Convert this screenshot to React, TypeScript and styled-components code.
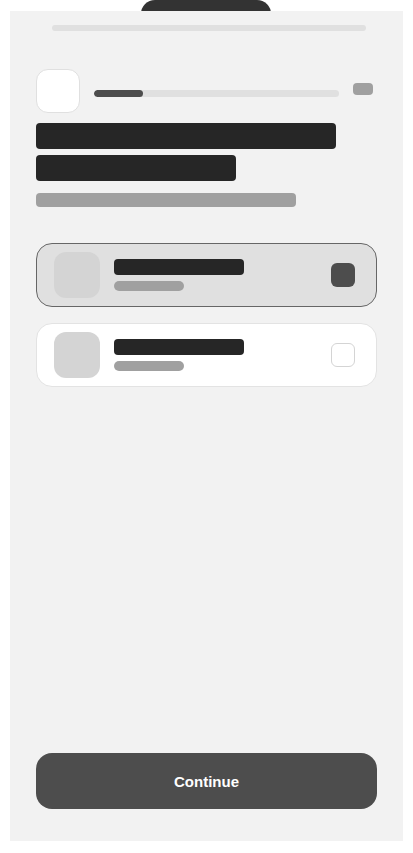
import styled, { createGlobalStyle } from 'styled-components'

const GlobalStyle = createGlobalStyle`
  * {
    box-sizing: border-box;
  }
  html, body {
    margin: 0;
    padding: 0;
    background: #ffffff;
    font-family: 'Liberation Sans', Arial, sans-serif;
  }
`

const options = [
  { id: 'a', selected: true },
  { id: 'b', selected: false },
]

function App() {
  return (
    <>
      <GlobalStyle />
      <Screen>
        <Notch />
        <Panel>
          <TopBar />
          <Header>
            <AvatarBox />
            <Track>
              <TrackFill style={{ width: '20%' }} />
            </Track>
            <Pill />
          </Header>
          <Title>
            <TitleLine width={300} />
            <TitleLine width={200} />
          </Title>
          <Subtitle />
          <OptionList>
            {options.map((opt) => (
              <OptionCard key={opt.id} selected={opt.selected}>
                <OptionIcon />
                <OptionText>
                  <OptionLabel />
                  <OptionHint />
                </OptionText>
                <Check selected={opt.selected} />
              </OptionCard>
            ))}
          </OptionList>
          <Spacer />
          <ContinueButton type="button">Continue</ContinueButton>
        </Panel>
      </Screen>
    </>
  )
}

const Screen = styled.div`
  position: relative;
  width: 413px;
  height: 853px;
  padding: 11px 10px 12px;
`

const Notch = styled.div`
  position: absolute;
  top: 0;
  left: 141px;
  width: 130px;
  height: 30px;
  border-radius: 14px;
  background: #333333;
`

const Panel = styled.main`
  position: relative;
  display: flex;
  flex-direction: column;
  height: 100%;
  padding: 14px 26px 32px;
  background: #f2f2f2;
`

const TopBar = styled.div`
  height: 6px;
  margin: 0 11px 0 16px;
  border-radius: 3px;
  background: #e0e0e0;
`

const Header = styled.div`
  display: flex;
  align-items: flex-start;
  gap: 14px;
  margin-top: 38px;
`

const AvatarBox = styled.div`
  flex: none;
  width: 44px;
  height: 44px;
  border-radius: 12px;
  border: 1px solid #e0e0e0;
  background: #ffffff;
`

const Track = styled.div`
  flex: 1;
  height: 7px;
  margin-top: 21px;
  border-radius: 4px;
  background: #e0e0e0;
  overflow: hidden;
`

const TrackFill = styled.div`
  height: 100%;
  border-radius: 4px;
  background: #4d4d4d;
`

const Pill = styled.div`
  flex: none;
  width: 20px;
  height: 12px;
  margin: 14px 4px 0 0;
  border-radius: 4px;
  background: #a0a0a0;
`

const Title = styled.div`
  display: flex;
  flex-direction: column;
  gap: 6px;
  margin-top: 10px;
`

const TitleLine = styled.div<{ width: number }>`
  width: ${(p) => p.width}px;
  height: 26px;
  border-radius: 4px;
  background: #262626;
`

const Subtitle = styled.div`
  width: 260px;
  height: 14px;
  margin-top: 12px;
  border-radius: 4px;
  background: #a0a0a0;
`

const OptionList = styled.div`
  display: flex;
  flex-direction: column;
  gap: 16px;
  margin-top: 36px;
`

const OptionCard = styled.div<{ selected: boolean }>`
  display: flex;
  align-items: center;
  height: 64px;
  padding: 0 21px 0 17px;
  border-radius: 16px;
  border: ${(p) => (p.selected ? '1.5px solid #666666' : '1.5px solid #e3e3e3')};
  background: ${(p) => (p.selected ? '#e0e0e0' : '#ffffff')};
`

const OptionIcon = styled.div`
  flex: none;
  width: 46px;
  height: 46px;
  border-radius: 12px;
  background: #d4d4d4;
`

const OptionText = styled.div`
  flex: 1;
  display: flex;
  flex-direction: column;
  gap: 6px;
  margin-left: 14px;
`

const OptionLabel = styled.div`
  width: 130px;
  height: 16px;
  border-radius: 4px;
  background: #262626;
`

const OptionHint = styled.div`
  width: 70px;
  height: 10px;
  border-radius: 5px;
  background: #a0a0a0;
`

const Check = styled.div<{ selected: boolean }>`
  flex: none;
  width: 24px;
  height: 24px;
  border-radius: 6px;
  border: ${(p) => (p.selected ? 'none' : '1.5px solid #d4d4d4')};
  background: ${(p) => (p.selected ? '#4d4d4d' : '#ffffff')};
`

const Spacer = styled.div`
  flex: 1;
`

const ContinueButton = styled.button`
  height: 56px;
  border: none;
  border-radius: 16px;
  background: #4d4d4d;
  color: #ffffff;
  font-family: 'Liberation Sans', Arial, sans-serif;
  font-size: 15px;
  font-weight: 700;
  cursor: pointer;
`

export default App
